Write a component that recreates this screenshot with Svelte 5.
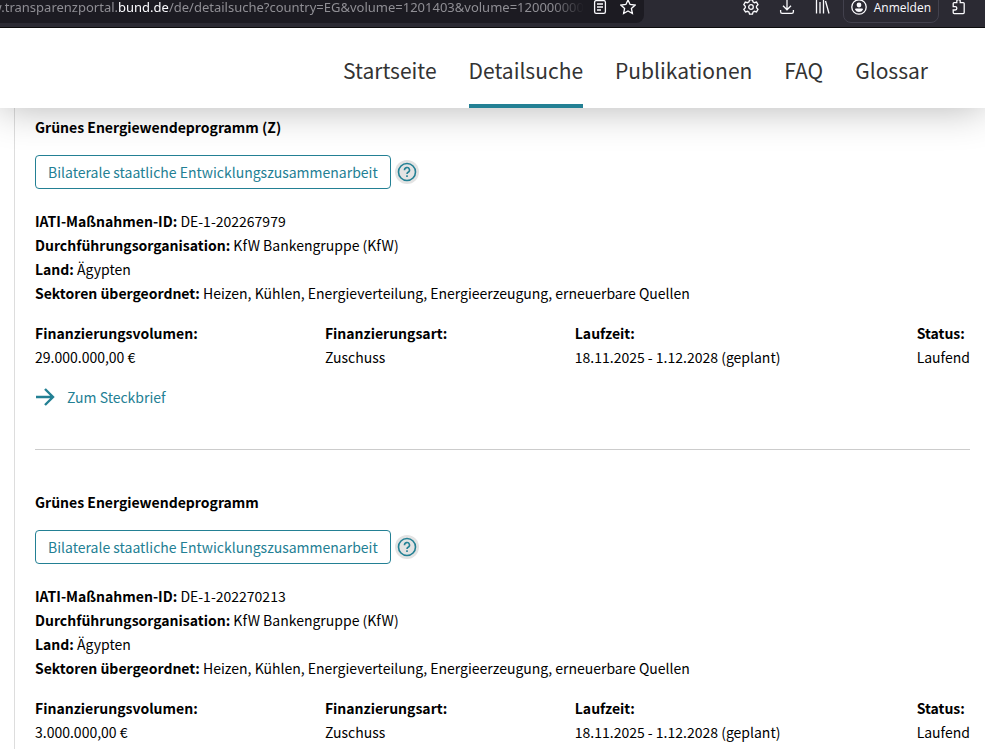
<script>
	const navItems = ['Startseite', 'Detailsuche', 'Publikationen', 'FAQ', 'Glossar'];
	let active = 'Detailsuche';

	const badge = 'Bilaterale staatliche Entwicklungszusammenarbeit';

	const projects = [
		{
			title: 'Grünes Energiewendeprogramm (Z)',
			facts: [
				['IATI-Maßnahmen-ID:', 'DE-1-202267979'],
				['Durchführungsorganisation:', 'KfW Bankengruppe (KfW)'],
				['Land:', 'Ägypten'],
				['Sektoren übergeordnet:', 'Heizen, Kühlen, Energieverteilung, Energieerzeugung, erneuerbare Quellen']
			],
			details: [
				['Finanzierungsvolumen:', '29.000.000,00 €'],
				['Finanzierungsart:', 'Zuschuss'],
				['Laufzeit:', '18.11.2025 - 1.12.2028 (geplant)'],
				['Status:', 'Laufend']
			],
			link: '#DE-1-202267979'
		},
		{
			title: 'Grünes Energiewendeprogramm',
			facts: [
				['IATI-Maßnahmen-ID:', 'DE-1-202270213'],
				['Durchführungsorganisation:', 'KfW Bankengruppe (KfW)'],
				['Land:', 'Ägypten'],
				['Sektoren übergeordnet:', 'Heizen, Kühlen, Energieverteilung, Energieerzeugung, erneuerbare Quellen']
			],
			details: [
				['Finanzierungsvolumen:', '3.000.000,00 €'],
				['Finanzierungsart:', 'Zuschuss'],
				['Laufzeit:', '18.11.2025 - 1.12.2028 (geplant)'],
				['Status:', 'Laufend']
			]
		}
	];
</script>

<div class="toolbar">
	<div class="urlbar">
		<div class="url" role="textbox" tabindex="0" contenteditable="true">
			<span>w.transparenzportal.<span class="domain">bund.de</span>/de/detailsuche?country=EG&amp;volume=1201403&amp;volume=120000000</span>
		</div>
		<button>
			<svg width="16" height="16" viewBox="0 0 16 16">
				<rect x="2.6" y="1.6" width="10.8" height="12.8" rx="1.6" />
				<path d="M5 5h6M5 8h6M5 11h4" />
			</svg>
		</button>
		<button>
			<svg width="16" height="16" viewBox="0 0 16 16">
				<path d="M8 .9l2.1 4.6 5 .6-3.7 3.4 1 5L8 12l-4.4 2.5 1-5L.9 6.100l5-.6z" />
			</svg>
		</button>
	</div>
	<div class="actions">
		<button>
			<svg width="16" height="16" viewBox="0 0 16 16">
				<path d="M6.500.9h3l.5 2 1.400.8 2.100-.6 1.500 2.600-1.500 1.500v1.600l1.500 1.500-1.500 2.600-2.100-.6-1.400.8-.5 2h-3l-.5-2-1.400-.8-2.100.6L.8 10.300l1.500-1.500V7.200L.8 5.700l1.500-2.600 2.100.6L6 2.900z" />
				<circle cx="8" cy="8" r="2.300" />
			</svg>
		</button>
		<button>
			<svg width="16" height="16" viewBox="0 0 16 16">
				<path d="M8 0v10.500M4 6.800l4 4 4-4M1.600 11v1.700q0 1.700 1.700 1.700h9.400q1.700 0 1.700-1.700V11" />
			</svg>
		</button>
		<button>
			<svg width="16" height="16" viewBox="0 0 16 16">
				<path d="M1.500 1v13.500M5 3v11.500M8.500 1v13.500M10.500 2l3.500 12.500" />
			</svg>
		</button>
		<button class="account">
			<svg width="16" height="16" viewBox="0 0 16 16">
				<circle cx="8" cy="8" r="7.200" />
				<circle cx="8" cy="6" r="2.400" class="solid" />
				<path class="solid" d="M4 10.500q0-1 1-1h6q1 0 1 1Q10.800 13 8 13t-4-2.500z" />
			</svg>
			Anmelden
		</button>
		<button>
			<svg width="16" height="16" viewBox="0 0 16 16">
				<path d="M5.800 3.600V2.200a1.700 1.700 0 0 1 3.400 0v1.400h3q1 0 1 1v9q0 1-1 1H3.200q-1 0-1-1v-2.600h2a1.600 1.600 0 0 0 0-3.300h-2V4.600q0-1 1-1z" />
			</svg>
		</button>
	</div>
</div>

<header>
	<nav>
		{#each navItems as item}
			<a href={`#${item.toLowerCase()}`} class:active={item === active} on:click={() => (active = item)}>{item}</a>
		{/each}
	</nav>
</header>

<main>
	{#each projects as project}
		<article>
			<h2>{project.title}</h2>
			<div class="category">
				<span class="badge">{badge}</span>
				<button class="help">
					<svg width="24" height="24" viewBox="0 0 24 24">
						<circle class="halo" cx="12" cy="12" r="12" />
						<circle cx="12" cy="12" r="8.500" />
						<path d="M9.500 10.200a2.500 2.500 0 1 1 3.600 2.100q-1.100.6-1.100 1.700" />
						<path d="M12 15.300v1.700" />
					</svg>
				</button>
			</div>
			<div class="facts">
				{#each project.facts as [label, value]}
					<p><b>{label}</b> {value}</p>
				{/each}
			</div>
			<dl>
				{#each project.details as [label, value]}
					<div>
						<dt>{label}</dt>
						<dd>{value}</dd>
					</div>
				{/each}
			</dl>
			{#if project.link}
				<a class="more" href={project.link}>
					<svg width="20" height="20" viewBox="0 0 20 20">
						<path d="M1 10h17M10 2l8 8-8 8" />
					</svg>
					Zum Steckbrief
				</a>
			{/if}
		</article>
	{/each}
</main>

<style>
	:global(body) {
		margin: 0;
		background: #fff;
	}

	:global(#app) {
		display: flex;
		flex-direction: column;
		min-height: 100vh;
	}

	button {
		display: flex;
		align-items: center;
		justify-content: center;
		padding: 0;
		border: none;
		background: none;
		color: inherit;
		font: inherit;
	}

	svg {
		flex: none;
		fill: none;
		stroke: currentColor;
		stroke-width: 1.3;
	}

	.toolbar {
		display: flex;
		align-items: flex-end;
		justify-content: space-between;
		box-sizing: border-box;
		height: 28px;
		padding: 0 18px 4px 0;
		overflow: hidden;
		border-bottom: 1px solid #0c0c0d;
		background: #2b2a33;
		color: #fbfbfe;
		font-family: 'Noto Sans', 'Open Sans', sans-serif;
		font-size: 13px;
	}

	.urlbar {
		display: flex;
		flex: 0 1 644px;
		align-items: center;
		gap: 4px;
		box-sizing: border-box;
		min-width: 0;
		height: 32px;
		padding-right: 4px;
		border-radius: 0 8px 8px 0;
		background: #1c1b22;
	}

	.urlbar button {
		width: 24px;
		height: 24px;
	}

	.url {
		display: flex;
		flex: 1;
		justify-content: flex-end;
		min-width: 0;
		overflow: hidden;
		color: #8f8e94;
		white-space: nowrap;
		mask-image: linear-gradient(to left, transparent, #000 32px);
	}

	.domain {
		color: #fbfbfe;
	}

	.actions {
		display: flex;
		align-items: center;
		gap: 20px;
		height: 32px;
	}

	.account {
		gap: 7px;
		box-sizing: border-box;
		height: 32px;
		margin: 0 -8px;
		padding: 0 7px;
		border: 1px solid #42414d;
		border-radius: 8px;
		font-family: 'Open Sans', sans-serif;
		font-size: 12px;
	}

	.solid {
		fill: currentColor;
		stroke: none;
	}

	header {
		position: relative;
		background: #fff;
		box-shadow: 0 0 40px rgba(0, 0, 0, 0.3);
		clip-path: inset(0 0 -60px 0);
	}

	nav {
		display: flex;
		justify-content: flex-end;
		gap: 32px;
		padding-right: 57px;
	}

	nav a {
		box-sizing: border-box;
		height: 80px;
		border-bottom: 4px solid transparent;
		color: #333;
		font-family: 'Noto Sans CJK SC', sans-serif;
		font-size: 21px;
		line-height: 84px;
		text-decoration: none;
	}

	nav a.active {
		border-color: #238094;
	}

	main {
		flex: 1;
		margin-left: 14px;
		padding: 7px 15px 0 20px;
		border-left: 1px solid #ddd;
		color: #000;
		font-family: 'Noto Sans CJK SC', sans-serif;
		font-size: 14px;
		line-height: 24px;
	}

	article + article {
		margin-top: 40px;
		padding-top: 40px;
		border-top: 1px solid #ccc;
	}

	h2,
	p,
	dl,
	dd {
		margin: 0;
	}

	h2 {
		font-size: 14px;
	}

	h2,
	b,
	dt {
		font-weight: bold;
	}

	.category {
		display: flex;
		align-items: center;
		gap: 4px;
		margin: 16px 0 20px;
	}

	.badge {
		padding: 4px 12px;
		border: 1px solid #238094;
		border-radius: 4px;
		color: #238094;
	}

	.help {
		color: #238094;
	}

	.help svg {
		stroke-width: 1.6;
	}

	.halo {
		fill: #e3e3e3;
		stroke: none;
	}

	dl {
		display: grid;
		grid-template-columns: 290fr 250fr 342fr auto;
		margin: 16px 0;
	}

	.more {
		display: inline-flex;
		align-items: center;
		gap: 12px;
		color: #238094;
		text-decoration: none;
		vertical-align: top;
	}

	.more svg {
		stroke-width: 2.4;
	}
</style>
